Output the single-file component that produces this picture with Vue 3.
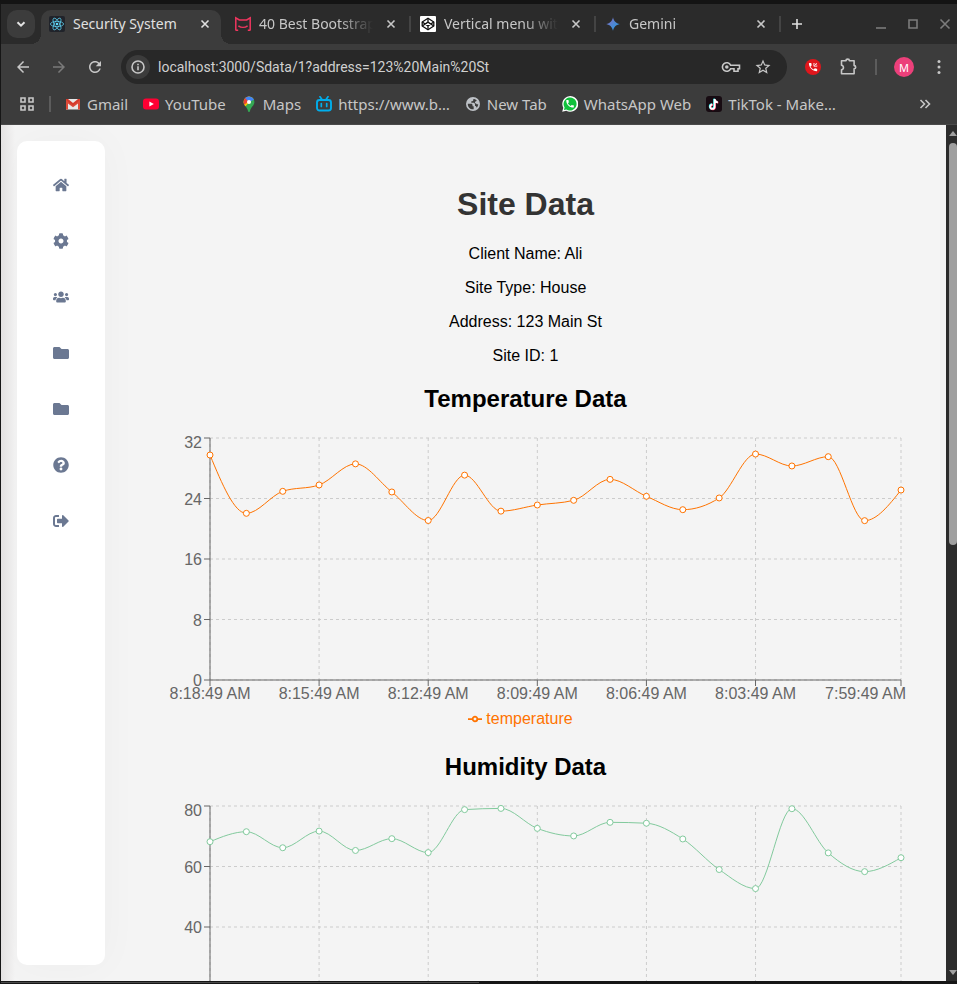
<script setup>
import { computed, onBeforeUnmount, onMounted, ref } from 'vue'

const url = ref('localhost:3000/Sdata/1?address=123%20Main%20St')

const tabs = [
  { id: 'react', title: 'Security System', active: true },
  { id: 'mdb', title: '40 Best Bootstrap Menus' },
  { id: 'codepen', title: 'Vertical menu with hover' },
  { id: 'gemini', title: 'Gemini' },
]

const bookmarks = [
  { id: 'gmail', title: 'Gmail' },
  { id: 'youtube', title: 'YouTube' },
  { id: 'maps', title: 'Maps' },
  { id: 'bili', title: 'https://www.b…' },
  { id: 'globe', title: 'New Tab' },
  { id: 'whatsapp', title: 'WhatsApp Web' },
  { id: 'tiktok', title: 'TikTok - Make…' },
]

const folder = 'M464 128H272l-64-64H48C21.49 64 0 85.49 0 112v288c0 26.51 21.49 48 48 48h416c26.51 0 48-21.49 48-48V176c0-26.51-21.49-48-48-48z'
const menu = [
  { label: 'Home', box: '0 0 576 512', path: 'M280.37 148.26L96 300.11V464a16 16 0 0 0 16 16l112.06-.29a16 16 0 0 0 15.92-16V368a16 16 0 0 1 16-16h64a16 16 0 0 1 16 16v95.64a16 16 0 0 0 16 16.05L464 480a16 16 0 0 0 16-16V300L295.67 148.26a12.19 12.19 0 0 0-15.3 0zM571.6 251.47L488 182.56V44.05a12 12 0 0 0-12-12h-56a12 12 0 0 0-12 12v72.61L318.47 43a48 48 0 0 0-61 0L4.34 251.47a12 12 0 0 0-1.6 16.9l25.5 31A12 12 0 0 0 45.15 301l235.22-193.74a12.19 12.19 0 0 1 15.3 0L530.9 301a12 12 0 0 0 16.9-1.6l25.5-31a12 12 0 0 0-1.7-16.93z' },
  { label: 'Settings', box: '0 0 512 512', path: 'M487.4 315.7l-42.6-24.6c4.3-23.2 4.3-47 0-70.2l42.6-24.6c4.9-2.8 7.1-8.6 5.5-14-11.1-35.6-30-67.8-54.7-94.6-3.8-4.1-10-5.1-14.8-2.3L380.8 110c-17.9-15.4-38.5-27.3-60.8-35.1V25.8c0-5.6-3.9-10.5-9.4-11.7-36.7-8.2-74.3-7.8-109.2 0-5.5 1.2-9.4 6.1-9.4 11.7V75c-22.2 7.9-42.8 19.8-60.8 35.1L88.7 85.5c-4.9-2.8-11-1.9-14.8 2.3-24.7 26.7-43.6 58.9-54.7 94.6-1.7 5.4.6 11.2 5.5 14L67.3 221c-4.3 23.2-4.3 47 0 70.2l-42.6 24.6c-4.9 2.8-7.1 8.6-5.5 14 11.1 35.6 30 67.8 54.7 94.6 3.8 4.1 10 5.1 14.8 2.3l42.6-24.6c17.9 15.4 38.5 27.3 60.8 35.1v49.2c0 5.6 3.9 10.5 9.4 11.7 36.7 8.2 74.3 7.8 109.2 0 5.5-1.2 9.4-6.1 9.4-11.7v-49.2c22.2-7.9 42.8-19.8 60.8-35.1l42.6 24.6c4.9 2.8 11 1.9 14.8-2.3 24.7-26.7 43.6-58.9 54.7-94.6 1.5-5.5-.7-11.3-5.6-14.1zM256 336c-44.1 0-80-35.9-80-80s35.9-80 80-80 80 35.9 80 80-35.9 80-80 80z' },
  { label: 'Clients', box: '0 0 640 512', path: 'M96 224c35.3 0 64-28.7 64-64s-28.7-64-64-64-64 28.7-64 64 28.7 64 64 64zm448 0c35.3 0 64-28.7 64-64s-28.7-64-64-64-64 28.7-64 64 28.7 64 64 64zm32 32h-64c-17.6 0-33.5 7.1-45.1 18.6 40.3 22.1 68.9 62 75.1 109.4h66c17.7 0 32-14.3 32-32v-32c0-35.3-28.7-64-64-64zm-256 0c61.9 0 112-50.1 112-112S381.9 32 320 32 208 82.1 208 144s50.1 112 112 112zm76.8 32h-8.3c-20.8 10-43.9 16-68.5 16s-47.6-6-68.5-16h-8.3C179.6 288 128 339.6 128 403.2V432c0 26.5 21.5 48 48 48h288c26.5 0 48-21.5 48-48v-28.8c0-63.6-51.6-115.2-115.2-115.2zm-223.7-13.4C161.5 263.1 145.6 256 128 256H64c-35.3 0-64 28.7-64 64v32c0 17.7 14.3 32 32 32h65.9c6.3-47.4 34.9-87.3 75.2-109.4z' },
  { label: 'Sites', box: '0 0 512 512', path: folder },
  { label: 'Reports', box: '0 0 512 512', path: folder },
  { label: 'Help', box: '0 0 512 512', path: 'M504 256c0 136.997-111.043 248-248 248S8 392.997 8 256C8 119.083 119.043 8 256 8s248 111.083 248 248zM262.655 90c-54.497 0-89.255 22.957-116.549 63.758-3.536 5.286-2.353 12.415 2.715 16.258l34.699 26.31c5.205 3.947 12.621 3.008 16.665-2.122 17.864-22.658 30.113-35.797 57.303-35.797 20.429 0 45.698 13.148 45.698 32.958 0 14.976-12.363 22.667-32.534 33.976C247.128 238.528 216 254.941 216 296v4c0 6.627 5.373 12 12 12h56c6.627 0 12-5.373 12-12v-1.333c0-28.462 83.186-29.647 83.186-106.667 0-58.002-60.165-102-116.531-102zM256 338c-25.365 0-46 20.635-46 46 0 25.364 20.635 46 46 46s46-20.636 46-46c0-25.365-20.635-46-46-46z' },
  { label: 'Sign out', box: '0 0 512 512', path: 'M497 273L329 441c-15 15-41 4.5-41-17v-96H152c-13.3 0-24-10.7-24-24v-96c0-13.3 10.7-24 24-24h136V88c0-21.4 25.9-32 41-17l168 168c9.3 9.4 9.3 24.6 0 34zM192 436v-40c0-6.6-5.4-12-12-12H96c-17.7 0-32-14.3-32-32V160c0-17.7 14.3-32 32-32h84c6.6 0 12-5.4 12-12V76c0-6.6-5.4-12-12-12H96c-53 0-96 43-96 96v192c0 53 43 96 96 96h84c6.6 0 12-5.4 12-12z' },
]

const details = ['Client Name: Ali', 'Site Type: House', 'Address: 123 Main St', 'Site ID: 1']

const timeLabels = [
  { index: 0, text: '8:18:49 AM' },
  { index: 3, text: '8:15:49 AM' },
  { index: 6, text: '8:12:49 AM' },
  { index: 9, text: '8:09:49 AM' },
  { index: 12, text: '8:06:49 AM' },
  { index: 15, text: '8:03:49 AM' },
  { index: 19, text: '7:59:49 AM' },
]

const series = [
  {
    title: 'Temperature Data', name: 'temperature', color: '#ff7300', ticks: [0, 8, 16, 24, 32],
    values: [29.75, 22.04, 24.95, 25.79, 28.58, 24.86, 21.09, 27.09, 22.33, 23.14, 23.76, 26.53, 24.29, 22.52, 24.07, 29.88, 28.3, 29.53, 21.07, 25.12],
  },
  {
    title: 'Humidity Data', name: 'humidity', color: '#82ca9d', ticks: [0, 20, 40, 60, 80],
    values: [68.2, 71.5, 66.2, 71.7, 65.3, 69.2, 64.6, 78.8, 79.2, 72.6, 70.1, 74.6, 74.3, 69.1, 59, 52.7, 79.1, 64.5, 58.3, 62.9],
  },
]

const plot = { left: 65, top: 5, height: 242, right: 5 }
const bottom = plot.top + plot.height
const dataArea = ref(null)
const width = ref(761)
let observer

onMounted(() => {
  const measure = () => { width.value = dataArea.value.clientWidth }
  measure()
  observer = new ResizeObserver(measure)
  observer.observe(dataArea.value)
})
onBeforeUnmount(() => observer?.disconnect())

// Monotone cubic interpolation through evenly ordered points.
function monotonePath(pts) {
  const n = pts.length
  const slope = (a, b) => (b.y - a.y) / (b.x - a.x)
  const t = pts.map((p, i) => {
    if (i === 0 || i === n - 1) return 0
    const h0 = p.x - pts[i - 1].x
    const h1 = pts[i + 1].x - p.x
    const s0 = slope(pts[i - 1], p)
    const s1 = slope(p, pts[i + 1])
    const m = (s0 * h1 + s1 * h0) / (h0 + h1)
    return (Math.sign(s0) + Math.sign(s1)) * Math.min(Math.abs(s0), Math.abs(s1), 0.5 * Math.abs(m)) || 0
  })
  t[0] = (3 * slope(pts[0], pts[1]) - t[1]) / 2
  t[n - 1] = (3 * slope(pts[n - 2], pts[n - 1]) - t[n - 2]) / 2
  let d = `M${pts[0].x},${pts[0].y}`
  for (let i = 1; i < n; i++) {
    const a = pts[i - 1]
    const b = pts[i]
    const dx = (b.x - a.x) / 3
    d += `C${a.x + dx},${a.y + dx * t[i - 1]},${b.x - dx},${b.y - dx * t[i]},${b.x},${b.y}`
  }
  return d
}

const charts = computed(() => series.map((s) => {
  const right = width.value - plot.right
  const max = s.ticks[s.ticks.length - 1]
  const xAt = (i) => plot.left + ((right - plot.left) * i) / (s.values.length - 1)
  const yAt = (v) => bottom - (plot.height * v) / max
  const points = s.values.map((v, i) => ({ x: xAt(i), y: yAt(v) }))
  return {
    ...s,
    right,
    points,
    line: monotonePath(points),
    xTicks: timeLabels.map((l, i) => {
      const last = i === timeLabels.length - 1
      return { ...l, x: xAt(l.index), textX: last ? width.value : xAt(l.index), anchor: last ? 'end' : 'middle' }
    }),
    yTicks: s.ticks.map((v) => ({ v, y: yAt(v), textY: Math.max(yAt(v), 9) + 6 })),
  }
}))
</script>

<template>
  <div class="window">
    <header class="chrome">
      <div class="tab-strip">
        <button class="tab-search" aria-label="Search tabs">
          <svg width="10" height="10" viewBox="0 0 10 10"><path d="M1.5 3.2 5 6.7l3.500-3.500" class="stroke thick" /></svg>
        </button>
        <div v-for="tab in tabs" :key="tab.id" class="tab" :class="{ active: tab.active }">
          <svg v-if="tab.id === 'react'" class="icon" viewBox="0 0 16 16">
            <rect width="16" height="16" rx="2" fill="#20232a" />
            <g fill="none" stroke="#61dafb" stroke-width=".7">
              <ellipse cx="8" cy="8" rx="6.600" ry="2.600" />
              <ellipse cx="8" cy="8" rx="6.600" ry="2.600" transform="rotate(60 8 8)" />
              <ellipse cx="8" cy="8" rx="6.600" ry="2.600" transform="rotate(120 8 8)" />
            </g>
            <circle cx="8" cy="8" r="1.300" fill="#61dafb" />
          </svg>
          <svg v-else-if="tab.id === 'mdb'" class="icon" viewBox="0 0 16 16">
            <g fill="none" stroke="#f0365f" stroke-width="1.500">
              <path d="M.8 14.600V1.800L4.300 4h7.400l3.500-2.200v12.800" />
              <path d="M.8 14.200h2.400M15.200 14.200h-2.400M3.400 9.800c2.600 1.900 6.600 1.900 9.200 0" />
            </g>
          </svg>
          <svg v-else-if="tab.id === 'codepen'" class="icon" viewBox="0 0 16 16">
            <rect width="16" height="16" rx="1" fill="#fff" />
            <g fill="none" stroke="#111" stroke-width="1.300" stroke-linejoin="round">
              <path d="M8 2.200 13.800 6v4L8 13.800 2.200 10V6z" />
              <path d="M2.200 6 8 9.900 13.800 6M2.200 10 8 6.100l5.800 3.900M8 2.200v3.900M8 9.900v3.900" />
            </g>
          </svg>
          <svg v-else class="icon" viewBox="0 0 16 16">
            <defs>
              <linearGradient id="spark" x1="0" y1="0" x2="1" y2="1">
                <stop offset="0" stop-color="#9168c0" /><stop offset=".45" stop-color="#5684d1" /><stop offset="1" stop-color="#1ba1e3" />
              </linearGradient>
            </defs>
            <path d="M8 1.200C8.900 5.200 10.800 7.100 14.800 8 10.800 8.900 8.900 10.800 8 14.800 7.100 10.800 5.200 8.900 1.200 8 5.200 7.100 7.100 5.200 8 1.200z" fill="url(#spark)" />
          </svg>
          <span class="tab-title">{{ tab.title }}</span>
          <button class="tab-close" :aria-label="`Close ${tab.title}`">
            <svg width="10" height="10" viewBox="0 0 10 10"><path d="M1.500 1.500l7 7M8.500 1.500l-7 7" class="stroke" /></svg>
          </button>
        </div>
        <button class="new-tab" aria-label="New tab">
          <svg width="12" height="12" viewBox="0 0 12 12"><path d="M6 1v10M1 6h10" class="stroke" /></svg>
        </button>
        <div class="window-controls">
          <button aria-label="Minimize"><svg width="12" height="12" viewBox="0 0 12 12"><path d="M1 10h10" class="stroke" /></svg></button>
          <button aria-label="Maximize"><svg width="12" height="12" viewBox="0 0 12 12"><path d="M2 2h8v8H2z" class="stroke" /></svg></button>
          <button aria-label="Close window"><svg width="12" height="12" viewBox="0 0 12 12"><path d="M1.500 1.500l9 9M10.500 1.500l-9 9" class="stroke" /></svg></button>
        </div>
      </div>

      <div class="toolbar">
        <button class="nav-button" aria-label="Back">
          <svg width="18" height="18" viewBox="0 0 24 24"><path d="M20 11H7.830l5.590-5.590L12 4l-8 8 8 8 1.410-1.410L7.830 13H20v-2z" /></svg>
        </button>
        <button class="nav-button dim" aria-label="Forward">
          <svg width="18" height="18" viewBox="0 0 24 24"><path d="M4 11h12.170l-5.590-5.590L12 4l8 8-8 8-1.410-1.410L16.170 13H4v-2z" /></svg>
        </button>
        <button class="nav-button" aria-label="Reload">
          <svg width="18" height="18" viewBox="0 0 24 24"><path d="M17.650 6.350C16.200 4.900 14.210 4 12 4c-4.420 0-7.990 3.580-7.990 8s3.570 8 7.990 8c3.730 0 6.840-2.550 7.730-6h-2.080c-.820 2.330-3.040 4-5.650 4-3.310 0-6-2.690-6-6s2.690-6 6-6c1.660 0 3.140.690 4.220 1.780L13 11h7V4l-2.350 2.350z" /></svg>
        </button>
        <div class="address">
          <button class="site-info" aria-label="View site information">
            <svg width="16" height="16" viewBox="0 0 16 16"><circle cx="8" cy="8" r="6" class="stroke" /><path d="M8 7.300v4M8 4.700v1.500" class="stroke" /></svg>
          </button>
          <input v-model="url" class="url" type="text" aria-label="Address" spellcheck="false">
          <button class="address-button" aria-label="Passwords">
            <svg width="20" height="18" viewBox="0 0 20 18">
              <path d="M9.600 7.200A4.300 4.300 0 1 0 9.600 10.800H13v2.400h4v-2.400h1.500V7.200z" class="stroke" /><circle cx="5.800" cy="9" r="1.800" />
            </svg>
          </button>
          <button class="address-button" aria-label="Bookmark this page">
            <svg width="18" height="18" viewBox="0 0 24 24"><path d="M22 9.240l-7.190-.620L12 2 9.190 8.630 2 9.240l5.460 4.730L5.820 21 12 17.270 18.180 21l-1.630-7.030L22 9.240zM12 15.400l-3.760 2.270 1-4.280-3.320-2.880 4.380-.380L12 6.100l1.710 4.040 4.380.380-3.320 2.880 1 4.280L12 15.400z" /></svg>
          </button>
        </div>
        <div class="actions">
          <button class="action" aria-label="Call extension">
            <svg width="16" height="16" viewBox="0 0 16 16">
              <circle cx="8" cy="8" r="8" fill="#e0161c" />
              <path transform="translate(2.500 2.500) scale(.46)" fill="#fff" d="M6.620 10.790c1.440 2.830 3.760 5.140 6.590 6.590l2.200-2.200c.270-.270.670-.360 1.020-.240 1.120.370 2.330.570 3.570.570.550 0 1 .450 1 1V20c0 .550-.450 1-1 1-9.390 0-17-7.610-17-17 0-.550.450-1 1-1h3.500c.550 0 1 .450 1 1 0 1.250.200 2.450.570 3.570.110.350.030.740-.250 1.020l-2.200 2.200z" />
              <path d="M8.900 4v3.200h3.300M12 4.200 9.300 6.800M9.900 4.500l1.800 1.800" fill="none" stroke="#fff" stroke-width=".8" />
            </svg>
          </button>
          <button class="action" aria-label="Extensions">
            <svg width="20" height="20" viewBox="0 0 20 20"><path d="M3.500 3.800H8a1.700 1.700 0 0 1 3.400 0h4.700V8.600a1.600 1.600 0 0 1 0 3.200v4.900H3.500v-3.900c2.600-.4 2.600-4.200 0-4.600z" class="stroke" stroke-linejoin="round" /></svg>
          </button>
          <span class="divider"></span>
          <button class="avatar" aria-label="Profile">M</button>
          <button class="action" aria-label="Menu">
            <svg width="16" height="16" viewBox="0 0 16 16"><circle cx="8" cy="2.500" r="1.500" /><circle cx="8" cy="8" r="1.500" /><circle cx="8" cy="13.500" r="1.500" /></svg>
          </button>
        </div>
      </div>

      <nav class="bookmarks" aria-label="Bookmarks">
        <button class="apps" aria-label="Tab groups">
          <svg width="16" height="16" viewBox="0 0 16 16"><path d="M2 2h4v4H2zM10 2h4v4h-4zM2 10h4v4H2zM10 10h4v4h-4z" class="stroke" /></svg>
        </button>
        <span class="divider"></span>
        <div class="bookmark-list">
          <a v-for="mark in bookmarks" :key="mark.id" class="bookmark" href="#">
            <svg v-if="mark.id === 'gmail'" class="icon" viewBox="0 0 16 16">
              <path d="M1 3h14v10.500H1z" fill="#e8e8e8" /><path d="M1 13.500V4l7 5.500L15 4v9.500h-2V7.500L8 11.300 3 7.500v6z" fill="#dd4b39" /><path d="M1 3h2l5 4 5-4h2v1.500L8 10 1 4.500z" fill="#d5392b" />
            </svg>
            <svg v-else-if="mark.id === 'youtube'" class="icon" viewBox="0 0 16 16">
              <rect y="2.500" width="16" height="11" rx="3" fill="#ff0033" /><path d="M6.400 5.500v5L10.800 8z" fill="#fff" />
            </svg>
            <svg v-else-if="mark.id === 'maps'" class="icon" viewBox="0 0 16 16">
              <defs><clipPath id="pin"><path d="M8 .5a5.400 5.400 0 0 1 5.400 5.400c0 3.600-3.600 5-4.400 9a1 1 0 0 1-2 0c-.8-4-4.400-5.400-4.400-9A5.400 5.400 0 0 1 8 .5z" /></clipPath></defs>
              <g clip-path="url(#pin)">
                <path d="M0 0h16v16H0z" fill="#34a853" /><path d="M0 0h16L8.500 6 3 12H0z" fill="#fbbc04" /><path d="M0 0h8L8 5 3.500 8.500 0 8z" fill="#ea4335" /><path d="M4 2 8 6l5.500-2.500L11 0H6z" fill="#4285f4" />
              </g>
              <circle cx="8" cy="5.900" r="2" fill="#fff" />
            </svg>
            <svg v-else-if="mark.id === 'bili'" class="icon" viewBox="0 0 16 16">
              <rect x="1" y="4" width="14" height="10.500" rx="2.500" fill="none" stroke="#00aeec" stroke-width="1.900" /><path d="M4 .8 6 3.500M12 .8 10 3.500" stroke="#00aeec" stroke-width="1.700" stroke-linecap="round" /><path d="M5.300 7.500v3M10.700 7.500v3" stroke="#00aeec" stroke-width="1.700" stroke-linecap="round" />
            </svg>
            <svg v-else-if="mark.id === 'globe'" class="icon" viewBox="0 0 24 24">
              <circle cx="12" cy="12" r="9.500" fill="#3c3c3c" />
              <path fill="#bdc1c6" d="M12 1.500a10.500 10.500 0 1 0 0 21 10.500 10.500 0 0 0 0-21zM4.200 11.500H9c1.800 0 2.300 1 2.300 2.500v1.500H13v4.300c-5 .6-9-3.300-8.800-8.300zM17.500 17.500c-.3-1.700-1-2.500-2.500-2.500v-2.500c0-1.700-1-2.500-2.500-2.500H9.500V8c2 0 3-.5 3-2.500V4.400c1.500 0 3.500.6 5 2.100-.2 1.300-1 2-2.500 2v2.500c1.500 0 2 .5 2.500 1.500h2.300c0 2-.9 3.800-2.300 5z" fill-rule="evenodd" />
            </svg>
            <svg v-else-if="mark.id === 'whatsapp'" class="icon" viewBox="0 0 16 16">
              <path d="M.2 15.800 1.300 11.800A8 7.900 0 1 1 4.300 14.800z" fill="#fff" /><path d="M1.900 14.100 2.600 11.500A6.500 6.500 0 1 1 4.500 13.400z" fill="#10c13c" />
              <path transform="translate(3 2.800) scale(.42)" fill="#fff" d="M6.620 10.790c1.440 2.830 3.760 5.140 6.590 6.590l2.200-2.200c.270-.270.670-.360 1.020-.240 1.120.370 2.330.570 3.570.570.550 0 1 .450 1 1V20c0 .550-.450 1-1 1-9.390 0-17-7.610-17-17 0-.550.450-1 1-1h3.500c.550 0 1 .450 1 1 0 1.250.200 2.450.570 3.570.110.350.030.740-.250 1.020l-2.200 2.200z" />
            </svg>
            <svg v-else class="icon" viewBox="0 0 16 16">
              <rect width="16" height="16" rx="3" fill="#170b12" />
              <g fill="none" stroke-width="1.800">
                <path d="M8.100 2.700v7.600a2.200 2.200 0 1 1-2.200-2.200M8.100 2.700c.2 2 1.600 3.100 3.300 3.200" stroke="#25f4ee" />
                <path d="M9.100 3.500v7.600a2.200 2.200 0 1 1-2.200-2.200M9.100 3.500c.2 2 1.600 3.100 3.300 3.200" stroke="#fe2c55" />
                <path d="M8.600 3.100v7.600a2.200 2.200 0 1 1-2.200-2.200M8.600 3.100c.2 2 1.600 3.100 3.300 3.200" stroke="#fff" />
              </g>
            </svg>
            <span>{{ mark.title }}</span>
          </a>
        </div>
        <button class="overflow" aria-label="More bookmarks">
          <svg width="12" height="12" viewBox="0 0 12 12"><path d="M1.500 2l4 4-4 4M6.500 2l4 4-4 4" class="stroke" /></svg>
        </button>
      </nav>
    </header>

    <div class="viewport">
      <div class="page">
        <aside class="sidebar">
          <a v-for="item in menu" :key="item.label" class="menu-item" href="#" :aria-label="item.label">
            <svg width="16" height="16" :viewBox="item.box"><path :d="item.path" /></svg>
          </a>
        </aside>
        <main class="content">
          <div ref="dataArea" class="data-area">
            <h1>Site Data</h1>
            <p v-for="line in details" :key="line">{{ line }}</p>
            <section v-for="chart in charts" :key="chart.name">
              <h2>{{ chart.title }}</h2>
              <figure class="chart">
                <svg class="plot" :width="width" height="277" role="img" :aria-label="chart.title">
                  <g stroke="#ccc" stroke-dasharray="3 3">
                    <line v-for="t in chart.yTicks" :key="`h${t.v}`" :x1="plot.left" :x2="chart.right" :y1="t.y" :y2="t.y" />
                    <line v-for="t in chart.xTicks" :key="`v${t.index}`" :x1="t.x" :x2="t.x" :y1="plot.top" :y2="bottom" />
                  </g>
                  <g stroke="#666">
                    <line :x1="plot.left" :x2="chart.right" :y1="bottom" :y2="bottom" />
                    <line :x1="plot.left" :x2="plot.left" :y1="plot.top" :y2="bottom" />
                    <line v-for="t in chart.yTicks" :key="t.v" :x1="plot.left - 6" :x2="plot.left" :y1="t.y" :y2="t.y" />
                    <line v-for="t in chart.xTicks" :key="t.index" :x1="t.x" :x2="t.x" :y1="bottom" :y2="bottom + 6" />
                  </g>
                  <g class="axis-text">
                    <text v-for="t in chart.yTicks" :key="t.v" :x="plot.left - 8" :y="t.textY" text-anchor="end">{{ t.v }}</text>
                    <text v-for="t in chart.xTicks" :key="t.index" :x="t.textX" :y="bottom + 19" :text-anchor="t.anchor">{{ t.text }}</text>
                  </g>
                  <path :d="chart.line" fill="none" :stroke="chart.color" />
                  <circle v-for="(p, i) in chart.points" :key="i" :cx="p.x" :cy="p.y" r="3" fill="#fff" :stroke="chart.color" />
                </svg>
                <figcaption class="legend" :style="{ color: chart.color }">
                  <svg width="14" height="14" viewBox="0 0 32 32"><path d="M0 16h10.700a5.300 5.300 0 1 1 10.600 0H32M21.300 16a5.300 5.300 0 1 1-10.600 0" fill="none" stroke="currentColor" stroke-width="4" /></svg>
                  {{ chart.name }}
                </figcaption>
              </figure>
            </section>
          </div>
        </main>
      </div>
      <div class="scrollbar" aria-hidden="true">
        <svg width="8" height="5" viewBox="0 0 8 5"><path d="M0 5 4 0l4 5z" /></svg>
        <div class="track"><div class="thumb"></div></div>
        <svg width="8" height="5" viewBox="0 0 8 5"><path d="M0 0h8L4 5z" /></svg>
      </div>
    </div>
    <div class="window-edge"><span></span></div>
  </div>
</template>

<style>
body {
  margin: 0;
  background: #161616;
}
</style>

<style scoped>
.window {
  display: flex;
  flex-direction: column;
  box-sizing: border-box;
  height: 100vh;
  overflow: hidden;
  border-top: 4px solid #141414;
  border-left: 1px solid #161616;
  background: #161616;
  font-family: "Liberation Sans", Arial, sans-serif;
}

button {
  display: flex;
  align-items: center;
  justify-content: center;
  flex: none;
  padding: 0;
  border: 0;
  background: none;
  color: inherit;
  font: inherit;
}

a {
  color: inherit;
  text-decoration: none;
}

svg {
  display: block;
  flex: none;
  fill: currentColor;
}

.stroke {
  fill: none;
  stroke: currentColor;
  stroke-width: 1.6;
}

.thick {
  stroke-width: 2;
}

.icon {
  width: 16px;
  height: 16px;
}

.chrome {
  flex: none;
  background: #3c3c3c;
  color: #c7c7c7;
  font-family: "Noto Sans", "Open Sans", sans-serif;
  font-size: 14px;
}

.tab-strip {
  display: flex;
  align-items: center;
  height: 40px;
  padding-left: 6px;
  background: #2b2b2b;
}

.tab-search {
  width: 28px;
  height: 28px;
  border-radius: 10px;
  background: #3c3c3c;
  color: #e3e3e3;
}

.tab {
  position: relative;
  display: flex;
  align-items: center;
  gap: 8px;
  flex: 0 1 185px;
  box-sizing: border-box;
  min-width: 0;
  height: 28px;
  padding: 0 10px 0 9px;
}

.tab:not(.active)::after {
  content: "";
  position: absolute;
  right: 0;
  width: 2px;
  height: 16px;
  background: #444;
}

.tab.active {
  flex-basis: 180px;
  align-self: flex-end;
  height: 34px;
  margin: 0 5px 0 6px;
  padding: 0 6px 6px 8px;
  border-radius: 10px 10px 0 0;
  background: #3c3c3c;
  color: #e0e0e0;
}

.tab.active::before,
.tab.active::after {
  content: "";
  position: absolute;
  bottom: 0;
  width: 10px;
  height: 10px;
}

.tab.active::before {
  right: 100%;
  background: radial-gradient(circle at 0 0, transparent 10px, #3c3c3c 10px);
}

.tab.active::after {
  left: 100%;
  background: radial-gradient(circle at 100% 0, transparent 10px, #3c3c3c 10px);
}

.tab-title {
  flex: 1;
  padding-bottom: 2px;
  overflow: hidden;
  white-space: nowrap;
  mask-image: linear-gradient(to right, #000 70%, transparent);
}

.active .tab-title {
  mask-image: none;
}

.tab-close {
  width: 20px;
  height: 20px;
}

.new-tab {
  width: 32px;
  height: 28px;
  color: #e0e0e0;
}

.window-controls {
  display: flex;
  gap: 20px;
  margin-left: auto;
  padding-right: 6px;
  color: #7c7c7c;
}

.toolbar {
  display: flex;
  align-items: center;
  height: 46px;
}

.nav-button {
  width: 36px;
  height: 36px;
}

.nav-button:first-child {
  margin-left: 4px;
}

.dim {
  color: #7a7a7a;
}

.address {
  display: flex;
  align-items: center;
  flex: 1;
  min-width: 0;
  height: 34px;
  margin-left: 8px;
  padding: 0 8px 0 5px;
  border-radius: 17px;
  background: #282828;
}

.site-info {
  width: 24px;
  height: 24px;
  border-radius: 50%;
  background: #3c3c3c;
}

.url {
  flex: 1;
  min-width: 0;
  padding: 0 8px;
  border: 0;
  outline: 0;
  background: none;
  color: #d0d0d0;
  font-family: Roboto, "Noto Sans", sans-serif;
  font-size: 14px;
}

.address-button {
  width: 32px;
  height: 32px;
}

.actions {
  display: flex;
  align-items: center;
  gap: 17px;
  padding: 0 10px 0 18px;
}

.divider {
  width: 2px;
  height: 16px;
  background: #5c5c5c;
}

.avatar {
  width: 20px;
  height: 20px;
  border-radius: 50%;
  background: #ec407a;
  color: #fff;
  font-size: 11px;
}

.bookmarks {
  display: flex;
  align-items: center;
  gap: 14px;
  box-sizing: border-box;
  height: 35px;
  padding: 0 26px 6px 18px;
  border-bottom: 1px solid #4a4a4a;
  font-size: 15px;
  line-height: 20px;
  white-space: nowrap;
}

.bookmark-list {
  display: flex;
  gap: 15px;
  min-width: 0;
  overflow: hidden;
}

.bookmark {
  display: flex;
  align-items: center;
  gap: 6px;
}

.overflow {
  margin-left: auto;
}

.viewport {
  display: flex;
  flex: 1;
  min-height: 0;
}

.page {
  display: flex;
  flex: 1;
  min-width: 0;
  overflow: hidden;
  background: linear-gradient(to right, #e4e2e2, #f4f4f4 14px);
}

.sidebar {
  display: flex;
  flex-direction: column;
  flex: none;
  box-sizing: border-box;
  width: 88px;
  margin: 16px 0 16px 16px;
  padding: 16px 20px;
  border-radius: 10px;
  background: #fff;
  box-shadow: 0 0 40px rgba(0, 0, 0, 0.03);
}

.menu-item {
  display: flex;
  align-items: center;
  justify-content: center;
  height: 56px;
  color: #6b7892;
}

.content {
  flex: 1;
  min-width: 0;
  padding: 40px;
  text-align: center;
}

.data-area {
  color: #000;
  font-size: 16px;
  line-height: 18px;
}

h1 {
  margin: 21px 0 22px;
  color: #333;
  font-size: 32px;
  line-height: 37px;
}

p {
  margin: 16px 0;
}

h2 {
  margin: 20px 0;
  font-size: 24px;
  line-height: 28px;
}

.chart {
  height: 300px;
  margin: 0;
}

.plot {
  overflow: visible;
}

.axis-text {
  fill: #666;
  font-size: 16px;
}

.legend {
  display: flex;
  align-items: center;
  justify-content: center;
  gap: 4px;
  padding-right: 10px;
}

.scrollbar {
  display: flex;
  flex-direction: column;
  align-items: flex-end;
  flex: none;
  width: 11px;
  padding: 6px 0;
  box-sizing: border-box;
  background: #2c2c2c;
  color: #9f9f9f;
}

.track {
  flex: 1;
  align-self: stretch;
  margin: 7px 0 7px 3px;
}

.thumb {
  height: 49%;
  border-radius: 5px;
  background: #9f9f9f;
}

.window-edge {
  flex: none;
  height: 3px;
}

.window-edge span {
  display: block;
  width: 50%;
  margin-top: 1px;
  border-top: 1px solid #4a4a4a;
}
</style>
